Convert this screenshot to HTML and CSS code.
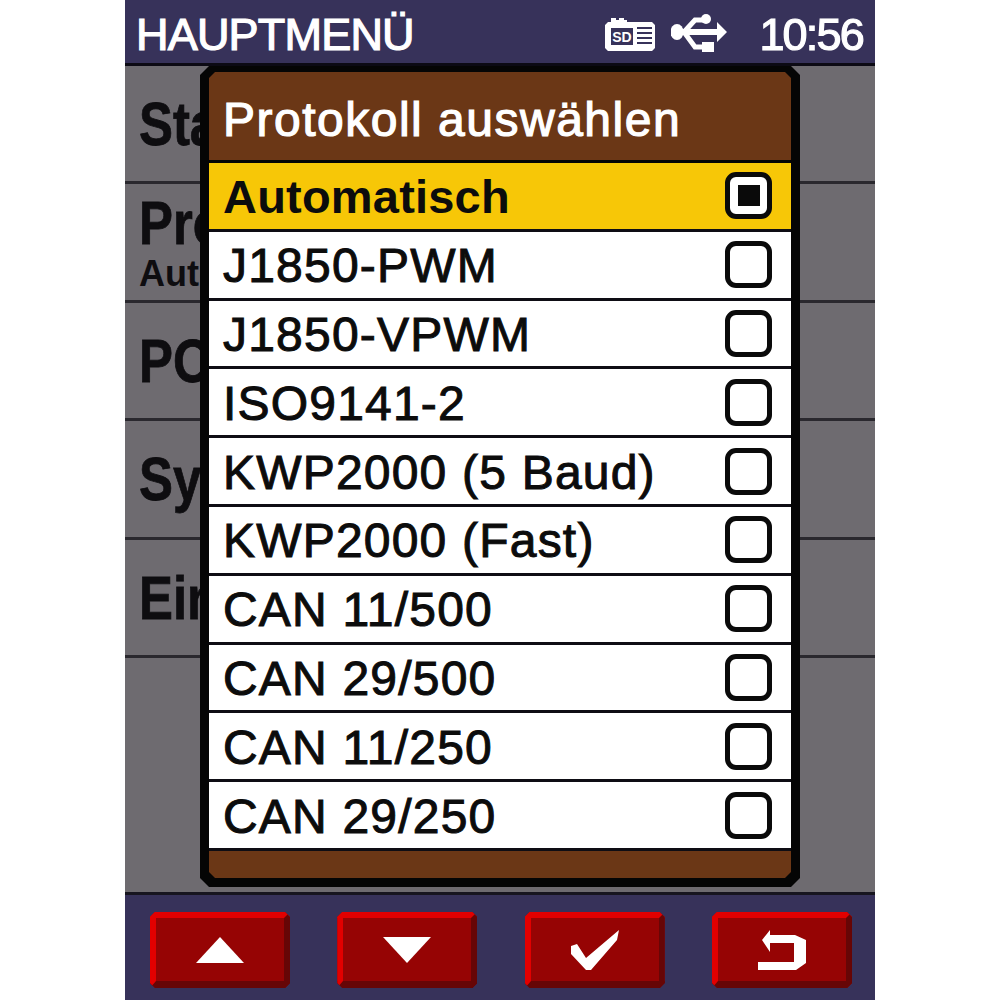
FILE: index.html
```html
<!DOCTYPE html>
<html lang="de">
<head>
<meta charset="utf-8">
<title>Protokoll auswählen</title>
<link rel="stylesheet" href="styles.css">
</head>
<body>
<div class="device">
  <header class="topbar">
    <span class="topbar-title">HAUPTMENÜ</span>
    <span class="status">
      <svg class="icon-sd" viewBox="0 0 50 34" aria-hidden="true">
        <path class="w" d="M3 5 H6 V1 H11 V3 H14 V1 H19 V3 H22 V5 H47 L50 8 V31 L47 34 H3 L0 31 V8 Z"/>
        <rect class="d" x="6" y="11" width="22" height="17"/>
        <text class="sd-text" x="17" y="25">SD</text>
        <path class="l" d="M32 11 H47 M32 16 H47 M32 21 H47 M32 26 H47"/>
      </svg>
      <svg class="icon-usb" viewBox="0 0 56 40" aria-hidden="true">
        <ellipse class="w" cx="6" cy="18" rx="6.5" ry="8"/>
        <path class="w" d="M8 15 H46 V8 L56 18 L46 28 V21 H8 Z"/>
        <path class="s" d="M13 18 L24 6 H33 M13 18 L24 33 H33"/>
        <circle class="w" cx="35" cy="5" r="5"/>
        <rect class="w" x="31" y="28" width="12" height="10"/>
      </svg>
      <span class="clock">10:56</span>
    </span>
  </header>
  <main class="screen">
    <div class="menu-row"><b>Status</b></div>
    <div class="menu-row has-sub"><b>Protokoll</b><small>Automatisch</small></div>
    <div class="menu-row"><b>POST</b></div>
    <div class="menu-row"><b>System</b></div>
    <div class="menu-row"><b>Einstellungen</b></div>
    <section class="dialog">
      <h1 class="dialog-title">Protokoll auswählen</h1>
      <ul class="options">
        <li class="option selected"><span>Automatisch</span><i class="box"><i class="dot"></i></i></li>
        <li class="option"><span>J1850-PWM</span><i class="box"></i></li>
        <li class="option"><span>J1850-VPWM</span><i class="box"></i></li>
        <li class="option"><span>ISO9141-2</span><i class="box"></i></li>
        <li class="option"><span>KWP2000 (5 Baud)</span><i class="box"></i></li>
        <li class="option"><span>KWP2000 (Fast)</span><i class="box"></i></li>
        <li class="option"><span>CAN 11/500</span><i class="box"></i></li>
        <li class="option"><span>CAN 29/500</span><i class="box"></i></li>
        <li class="option"><span>CAN 11/250</span><i class="box"></i></li>
        <li class="option"><span>CAN 29/250</span><i class="box"></i></li>
      </ul>
      <div class="dialog-foot"></div>
    </section>
  </main>
  <footer class="softkeys">
    <button class="key"><svg class="tri" viewBox="0 0 48 26"><path class="w" d="M24 0 L48 26 H0 Z"/></svg></button>
    <button class="key"><svg class="tri" viewBox="0 0 48 26"><path class="w" d="M0 0 H48 L24 26 Z"/></svg></button>
    <button class="key"><svg class="glyph" viewBox="0 0 48 40"><path class="w" d="M0 16 L6 14 L15 28 L48 0 L46 10 L20 40 H15 L0 24 Z"/></svg></button>
    <button class="key"><svg class="glyph" viewBox="0 0 48 40"><path class="w" d="M12 0 V5 H37 L48 10 V33 L38 40 H0 V32 H36 V13 H12 V22 L4 10 Z"/></svg></button>
  </footer>
</div>
</body>
</html>
```
FILE: styles.css
```css
* { box-sizing: border-box; }
html, body { margin: 0; padding: 0; background: #fff; }
body { display: flex; justify-content: center; }
.device {
  width: 750px;
  height: 1000px;
  display: flex;
  flex-direction: column;
  font-family: "Liberation Sans", Arial, sans-serif;
  filter: blur(0.6px);
  overflow: hidden;
}
.topbar {
  height: 66px;
  flex: none;
  background: #37325a;
  border-bottom: 3px solid #0c0a14;
  display: flex;
  align-items: center;
  justify-content: space-between;
  padding: 4px 12px 0 11px;
  color: #fff;
}
.topbar-title { font-size: 45px; letter-spacing: -0.8px; -webkit-text-stroke: 1.2px #fff; margin-top: 3px; }
.status { display: flex; align-items: center; }
.icon-sd { width: 50px; height: 34px; margin-right: 16px; }
.icon-usb { width: 56px; height: 40px; margin-right: 32px; }
.clock { font-size: 45px; -webkit-text-stroke: 1.2px #fff; letter-spacing: -1.8px; margin-top: 3px; }
.w { fill: #fff; }
.d { fill: #37325a; }
.l { stroke: #37325a; stroke-width: 2; fill: none; }
.s { stroke: #fff; stroke-width: 5; fill: none; }
.sd-text { fill: #fff; font: bold 14px "Liberation Sans", Arial, sans-serif; text-anchor: middle; }

.screen {
  position: relative;
  flex: 1;
  background: #6e6b70;
  border-bottom: 3px solid #17151f;
  display: flex;
  flex-direction: column;
}
.menu-row {
  height: 118.5px;
  flex: none;
  border-bottom: 3px solid #2a282e;
  padding: 22px 0 0 14px;
  color: #0e0d10;
  display: flex;
  flex-direction: column;
}
.menu-row:first-child { height: 118px; }
.menu-row b {
  font-size: 62px;
  line-height: 72px;
  white-space: nowrap;
  -webkit-text-stroke: 0.8px #0e0d10;
  transform: scaleX(0.82);
  transform-origin: left center;
}
.menu-row.has-sub { padding-top: 6px; }
.menu-row.has-sub b { line-height: 66px; }
.menu-row small { font-size: 36px; font-weight: bold; line-height: 36px; }

.dialog {
  position: absolute;
  left: 75px;
  top: 0;
  width: 600px;
  height: 821px;
  background: #050505;
  padding: 6px 9px 8px 9px;
  display: flex;
  flex-direction: column;
  clip-path: polygon(9px 0, 591px 0, 600px 9px, 600px 812px, 591px 821px, 9px 821px, 0 812px, 0 9px);
}
.dialog-title {
  margin: 0;
  height: 88px;
  flex: none;
  background: #6b3716;
  color: #fff;
  font-size: 48px;
  font-weight: normal;
  -webkit-text-stroke: 1.2px #fff;
  letter-spacing: 1.5px;
  padding: 0 0 0 14px;
  line-height: 96px;
  clip-path: polygon(6px 0, 576px 0, 582px 6px, 582px 88px, 0 88px, 0 6px);
}
.options {
  list-style: none;
  margin: 3px 0 0;
  padding: 0;
  flex: none;
  height: 688px;
  display: flex;
  flex-direction: column;
}
.option {
  flex: 1;
  background: #fff;
  border-bottom: 3px solid #0e0d14;
  display: flex;
  align-items: center;
  justify-content: space-between;
  padding: 0 19px 0 14px;
  font-size: 48px;
  color: #0c0c0c;
  -webkit-text-stroke: 1px #0c0c0c;
  letter-spacing: 1.2px;
}
.option span { margin-top: 2px; }
.option.selected { background: #f7c707; font-size: 47px; font-weight: bold; -webkit-text-stroke: 0; letter-spacing: 0.2px; }
.box {
  width: 47px;
  height: 47px;
  flex: none;
  border: 5px solid #0a0a0a;
  border-radius: 11px;
  background: #fff;
  display: flex;
  align-items: center;
  justify-content: center;
}
.dot { width: 22px; height: 21px; background: #0a0a0a; }
.dialog-foot {
  flex: 1;
  background: #6b3716;
  clip-path: polygon(0 0, 582px 0, 582px 21px, 576px 27px, 6px 27px, 0 21px);
}

.softkeys {
  height: 105px;
  flex: none;
  background: #37325a;
  display: flex;
  justify-content: space-between;
  padding: 17px 23px 0 25px;
}
.key {
  width: 140px;
  height: 76px;
  padding: 0;
  background: #960404;
  border-style: solid;
  border-width: 6px 6px 7px 6px;
  border-color: #e20000 #660606 #660606 #e20000;
  clip-path: polygon(5px 0, 135px 0, 140px 5px, 140px 71px, 135px 76px, 5px 76px, 0 71px, 0 5px);
  display: flex;
  align-items: center;
  justify-content: center;
}
.key .tri { width: 48px; height: 26px; }
.key .glyph { width: 48px; height: 40px; }
```
